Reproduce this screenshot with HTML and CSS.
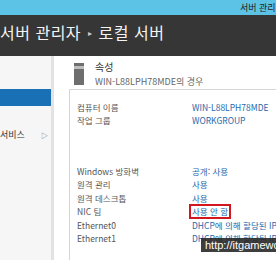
FILE: index.html
```html
<!DOCTYPE html>
<html lang="ko">
<head>
<meta charset="UTF-8">
<title>서버 관리자</title>
<link rel="stylesheet" href="styles.css">
</head>
<body>
<div class="topbar"><span>서버 관리자</span></div>
<div class="titlebar">
    <h1>서버 관리자<span class="sep">&#9656;</span>로컬 서버</h1>
</div>
<div class="main">
    <nav class="nav">
        <a class="item active"></a>
        <a class="item">서비스 <span class="arrow">&#9655;</span></a>
    </nav>
    <div class="content">
        <div class="head">
            <div class="icon"></div>
            <div class="head-text">
                <div class="title">속성</div>
                <div class="sub">WIN-L88LPH78MDE의 경우</div>
            </div>
        </div>
        <div class="props">
            <div class="group">
                <div class="row"><span class="label">컴퓨터 이름</span><a class="value">WIN-L88LPH78MDE</a></div>
                <div class="row"><span class="label">작업 그룹</span><a class="value">WORKGROUP</a></div>
            </div>
            <div class="group">
                <div class="row"><span class="label">Windows 방화벽</span><a class="value">공개: 사용</a></div>
                <div class="row"><span class="label">원격 관리</span><a class="value">사용</a></div>
                <div class="row"><span class="label">원격 데스크톱</span><a class="value">사용</a></div>
                <div class="row"><span class="label">NIC 팀</span><a class="value"><span class="mark">사용 안 함</span></a></div>
                <div class="row"><span class="label">Ethernet0</span><a class="value">DHCP에 의해 할당된 IPv4 주소</a></div>
                <div class="row"><span class="label">Ethernet1</span><a class="value">DHCP에 의해 할당된 IPv4 주소</a></div>
            </div>
        </div>
    </div>
</div>
<div class="watermark">http://itgameworld.tistory.com</div>
</body>
</html>
```
FILE: styles.css
```css
body {margin: 0;width: 276px;height: 260px;overflow: hidden;position: relative;background: #fff;font-family: "Noto Sans CJK KR", "Noto Sans", sans-serif;}
.topbar {height: 15px;background: #5cc3e6;padding-left: 240px;white-space: nowrap;overflow: hidden;font-size: 9px;line-height: 15px;color: #222;}
.titlebar {height: 41px;background: #363636;overflow: hidden;white-space: nowrap;}
.titlebar h1 {margin: 0;font-size: 16px;font-weight: normal;line-height: 34px;color: #f4f4f4;letter-spacing: .5px;}
.titlebar .sep {font-size: 8px;color: #ccc;vertical-align: 3px;margin: 0 6px 0 7px;}
.main {display: flex;height: 204px;overflow: hidden;}
.nav {width: 54px;flex: none;background: #f6f6f6;border-right: 3px solid #e3e3e3;padding-top: 33px;box-sizing: border-box;overflow: hidden;}
.nav .item {display: flex;align-items: center;justify-content: space-between;height: 17px;font-size: 9px;color: #333;white-space: nowrap;}
.nav .active {background: #1a70b5;margin-bottom: 20px;}
.nav .arrow {font-size: 7px;color: #666;margin-right: 3px;}
.content {flex: 1;padding: 7px 0 0 15px;min-width: 0;overflow: hidden;}
.head {display: flex;align-items: flex-start;gap: 11px;height: 26px;padding-left: 5px;}
.icon {width: 10px;height: 22px;background: #6e6e6e;border-top: 3px solid #6e6e6e;box-shadow: inset 0 3px 0 #bdbdbd;box-sizing: border-box;}
.head-text {font-size: 9px;line-height: 12px;white-space: nowrap;}
.title {color: #333;font-size: 10px;margin-top: -2px;}
.sub {color: #666;margin-top: 3px;}
.props {border-top: 1px solid #d6d6d6;border-left: 1px solid #d6d6d6;padding: 10px 0 0 7px;height: 160px;}
.group {margin-bottom: 37px;}
.row {display: flex;height: 13.5px;align-items: center;font-size: 8.5px;white-space: nowrap;}
.label {width: 115px;flex: none;color: #555;}
.value {color: #2468ad;}
.mark {display: inline-block;border: 2px solid #d2171e;padding: 0 1px;margin-left: -3px;line-height: 11px;}
.watermark {position: absolute;left: 201px;top: 238px;right: 0;height: 14px;overflow: hidden;background: rgba(35, 35, 35, .88);color: #fff;font: 11px/14px "Liberation Sans", sans-serif;padding-left: 4px;white-space: nowrap;}
```
